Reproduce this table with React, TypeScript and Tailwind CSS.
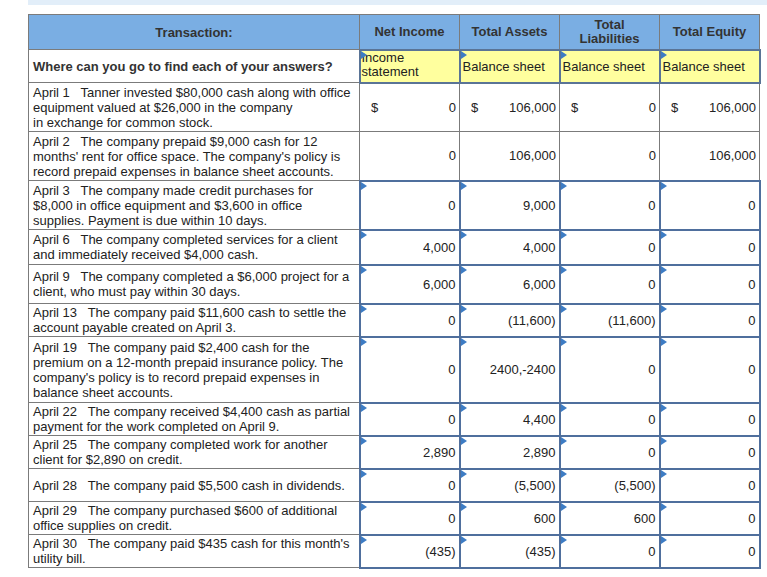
import React from 'react'

type Row = {
  h: string
  lines: string[]
  input: boolean
  values: string[]
  dollar?: boolean
}

const sp = '\u00a0\u00a0 '

const rows: Row[] = [
  {
    h: 'h-[49px]',
    lines: [
      `April 1${sp}Tanner invested $80,000 cash along with office`,
      'equipment valued at $26,000 in the company',
      'in exchange for common stock.',
    ],
    input: false,
    values: ['0', '106,000', '0', '106,000'],
    dollar: true,
  },
  {
    h: 'h-[49px]',
    lines: [
      `April 2${sp}The company prepaid $9,000 cash for 12`,
      "months' rent for office space. The company's policy is",
      'record prepaid expenses in balance sheet accounts.',
    ],
    input: false,
    values: ['0', '106,000', '0', '106,000'],
  },
  {
    h: 'h-[49px]',
    lines: [
      `April 3${sp}The company made credit purchases for`,
      '$8,000 in office equipment and $3,600 in office',
      'supplies. Payment is due within 10 days.',
    ],
    input: true,
    values: ['0', '9,000', '0', '0'],
  },
  {
    h: 'h-[35px]',
    lines: [
      `April 6${sp}The company completed services for a client`,
      'and immediately received $4,000 cash.',
    ],
    input: true,
    values: ['4,000', '4,000', '0', '0'],
  },
  {
    h: 'h-[39px]',
    lines: [
      `April 9${sp}The company completed a $6,000 project for a`,
      'client, who must pay within 30 days.',
    ],
    input: true,
    values: ['6,000', '6,000', '0', '0'],
  },
  {
    h: 'h-[33px]',
    lines: [
      `April 13${sp}The company paid $11,600 cash to settle the`,
      'account payable created on April 3.',
    ],
    input: true,
    values: ['0', '(11,600)', '(11,600)', '0'],
  },
  {
    h: 'h-[66px]',
    lines: [
      `April 19${sp}The company paid $2,400 cash for the`,
      'premium on a 12-month prepaid insurance policy. The',
      "company's policy is to record prepaid expenses in",
      'balance sheet accounts.',
    ],
    input: true,
    values: ['0', '2400,-2400', '0', '0'],
  },
  {
    h: 'h-[33px]',
    lines: [
      `April 22${sp}The company received $4,400 cash as partial`,
      'payment for the work completed on April 9.',
    ],
    input: true,
    values: ['0', '4,400', '0', '0'],
  },
  {
    h: 'h-[33px]',
    lines: [
      `April 25${sp}The company completed work for another`,
      'client for $2,890 on credit.',
    ],
    input: true,
    values: ['2,890', '2,890', '0', '0'],
  },
  {
    h: 'h-[33px]',
    lines: [`April 28${sp}The company paid $5,500 cash in dividends.`],
    input: true,
    values: ['0', '(5,500)', '(5,500)', '0'],
  },
  {
    h: 'h-[33px]',
    lines: [
      `April 29${sp}The company purchased $600 of additional`,
      'office supplies on credit.',
    ],
    input: true,
    values: ['0', '600', '600', '0'],
  },
  {
    h: 'h-[33px]',
    lines: [`April 30${sp}The company paid $435 cash for this month's`, 'utility bill.'],
    input: true,
    values: ['(435)', '(435)', '0', '0'],
  },
]

function Flag() {
  return (
    <span className="absolute left-0 top-0 h-0 w-0 border-y-[4px] border-l-[6px] border-y-transparent border-l-[#3d7cc4]" />
  )
}

export default function App() {
  return (
    <div className="min-h-[577px] bg-white font-['Liberation_Sans',Arial,sans-serif] text-[13px] leading-[15px] text-[#222]">
      <div className="ml-[28px] h-[5px] bg-[#e2eef9]" />
      <table className="ml-[28px] mt-[9px] table-fixed border-collapse">
        <colgroup>
          <col className="w-[331px]" />
          <col className="w-[100px]" />
          <col className="w-[100px]" />
          <col className="w-[100px]" />
          <col className="w-[100px]" />
        </colgroup>
        <thead>
          <tr className="h-[35px] bg-[#7aaee3] text-[13px] font-bold text-[#333]">
            <th className="border border-[#7b7b7b] font-bold">Transaction:</th>
            <th className="border border-[#7b7b7b] font-bold">Net Income</th>
            <th className="border border-[#7b7b7b] font-bold">Total Assets</th>
            <th className="border border-[#7b7b7b] font-bold leading-[14px]">
              Total
              <br />
              Liabilities
            </th>
            <th className="border border-[#7b7b7b] font-bold">Total Equity</th>
          </tr>
        </thead>
        <tbody>
          <tr className="h-[33px]">
            <td className="border border-[#7b7b7b] px-[4px] font-bold text-[#333]">
              Where can you go to find each of your answers?
            </td>
            <td className="relative border-2 border-[#5a7496] bg-[#ffff9e] px-[1px] align-top leading-[14px]">
              <Flag />
              Income
              <br />
              statement
            </td>
            {['Balance sheet', 'Balance sheet', 'Balance sheet'].map((t, i) => (
              <td key={i} className="relative border-2 border-[#5a7496] bg-[#ffff9e] px-[2px]">
                <Flag />
                {t}
              </td>
            ))}
          </tr>
          {rows.map((r, i) => (
            <tr key={i} className={r.h}>
              <td className="whitespace-nowrap border border-[#7b7b7b] px-[4px]">
                {r.lines.map((l, k) => (
                  <div key={k}>{l}</div>
                ))}
              </td>
              {r.values.map((v, j) =>
                r.input ? (
                  <td key={j} className="relative border-2 border-[#4f6f9d] pr-[3px] text-right">
                    <Flag />
                    {v}
                  </td>
                ) : (
                  <td key={j} className="border border-[#7b7b7b] pr-[3px] text-right">
                    {r.dollar ? (
                      <div className="flex justify-between pl-[11px]">
                        <span>$</span>
                        <span>{v}</span>
                      </div>
                    ) : (
                      v
                    )}
                  </td>
                ),
              )}
            </tr>
          ))}
        </tbody>
      </table>
    </div>
  )
}
